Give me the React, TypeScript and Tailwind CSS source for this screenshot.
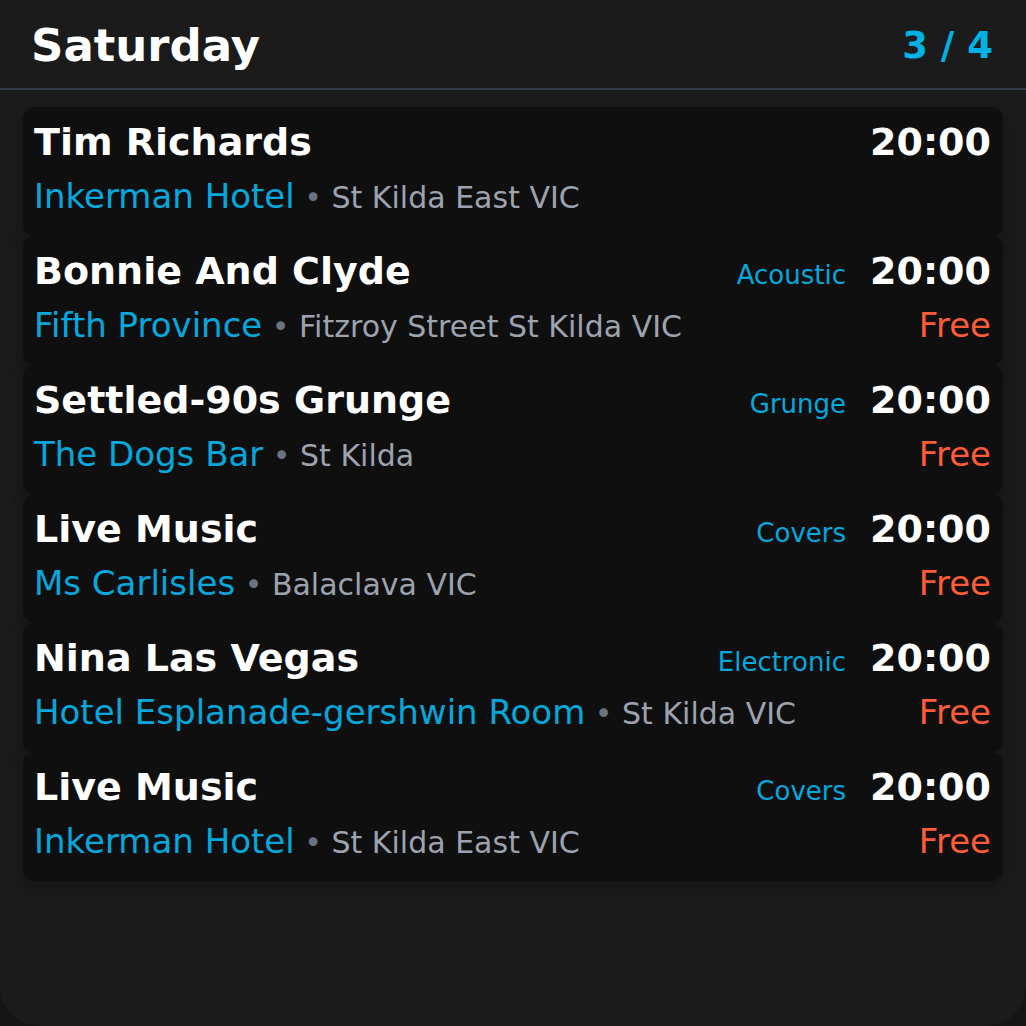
import React from 'react';

interface Gig {
  title: string;
  venue: string;
  location: string;
  genre?: string;
  time: string;
  price?: string;
}

const gigs: Gig[] = [
  { title: 'Tim Richards', venue: 'Inkerman Hotel', location: 'St Kilda East VIC', time: '20:00' },
  { title: 'Bonnie And Clyde', venue: 'Fifth Province', location: 'Fitzroy Street St Kilda VIC', genre: 'Acoustic', time: '20:00', price: 'Free' },
  { title: 'Settled-90s Grunge', venue: 'The Dogs Bar', location: 'St Kilda', genre: 'Grunge', time: '20:00', price: 'Free' },
  { title: 'Live Music', venue: 'Ms Carlisles', location: 'Balaclava VIC', genre: 'Covers', time: '20:00', price: 'Free' },
  { title: 'Nina Las Vegas', venue: 'Hotel Esplanade-gershwin Room', location: 'St Kilda VIC', genre: 'Electronic', time: '20:00', price: 'Free' },
  { title: 'Live Music', venue: 'Inkerman Hotel', location: 'St Kilda East VIC', genre: 'Covers', time: '20:00', price: 'Free' },
];

const GigCard: React.FC<{ gig: Gig }> = ({ gig }) => (
  <div className="h-[129px] rounded-xl bg-[#0f0f0f] pl-[11px] pr-3 pt-[13px] shadow-[0_6px_16px_rgba(0,0,0,0.25)]">
    <div className="flex items-baseline justify-between leading-[1.164]">
      <span className="text-[38px] font-bold text-white">{gig.title}</span>
      <div className="flex items-baseline gap-6">
        {gig.genre && <span className="text-[26px] text-[#05a8dd]">{gig.genre}</span>}
        <span className="text-[38px] font-bold text-white">{gig.time}</span>
      </div>
    </div>
    <div className="mt-[13px] flex items-baseline justify-between leading-[1.164]">
      <div className="flex items-baseline whitespace-pre">
        <span className="text-[34px] text-[#05a8dd]">{gig.venue}</span>
        <span className="text-[30px] text-[#6b7280]"> • </span>
        <span className="text-[30px] text-[#9ca3af]">{gig.location}</span>
      </div>
      {gig.price && <span className="text-[34px] text-[#ff5c38]">{gig.price}</span>}
    </div>
  </div>
);

export default function App() {
  return (
    <div className="min-h-screen bg-[#151515]" style={{ fontFamily: '"DejaVu Sans", sans-serif' }}>
      <div className="h-[1026px] w-full overflow-hidden rounded-b-[40px] bg-[#1b1b1b]">
        <header className="flex h-[90px] items-center justify-between border-b-2 border-[#353b46] pl-[31px] pr-[33px] pt-[3px]">
          <h1 className="text-[45px] font-bold text-white">Saturday</h1>
          <span className="text-[37px] font-bold text-[#00b2e3]">3 / 4</span>
        </header>
        <div className="flex flex-col px-[23px] pt-[17px]">
          {gigs.map((g, i) => (
            <GigCard key={i} gig={g} />
          ))}
        </div>
      </div>
    </div>
  );
}
